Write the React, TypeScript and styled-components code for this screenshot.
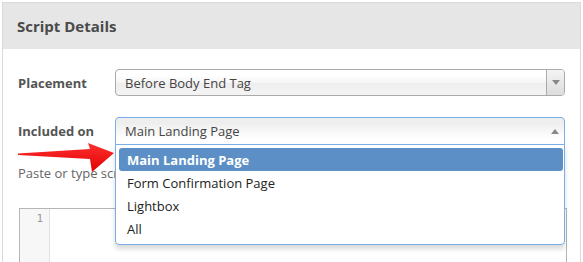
import React from "react";
import styled, { createGlobalStyle } from "styled-components";

const Global = createGlobalStyle`
  html, body { margin: 0; padding: 0; background: #fff; overflow: hidden; }
  body { font-family: "Open Sans", "Noto Sans", sans-serif; }
  * { box-sizing: border-box; }
`;

const Page = styled.div`
  position: relative;
  width: 583px;
  height: 262px;
  overflow: hidden;
  padding: 2px 2px 0 2px;
`;

const Panel = styled.section`
  border: 1px solid #dadada;
  min-height: 320px;
  background: #fff;
`;

const Header = styled.header`
  height: 46px;
  background: #e6e6e6;
  display: flex;
  align-items: center;
  padding-left: 14px;
`;

const Title = styled.h2`
  margin: 0;
  font-size: 15px;
  font-weight: 700;
  color: #4a4a4a;
  letter-spacing: 0;
`;

const Body = styled.div`
  padding: 20px 14px 0 15px;
  display: flex;
  flex-direction: column;
`;

const Row = styled.div<{ $gap?: number }>`
  display: grid;
  grid-template-columns: 97px 450px;
  align-items: center;
  margin-bottom: ${(p) => p.$gap ?? 0}px;
`;

const Label = styled.label`
  font-size: 13px;
  font-weight: 700;
  color: #555;
`;

const SelectBox = styled.div<{ $open?: boolean }>`
  position: relative;
  height: ${(p) => (p.$open ? 28 : 27)}px;
  border: 1px solid ${(p) => (p.$open ? "#79aee8" : "#aaa")};
  border-radius: ${(p) => (p.$open ? "4px 4px 0 0" : "4px")};
  background: ${(p) =>
    p.$open
      ? "linear-gradient(#eee 20%, #fff 80%)"
      : "linear-gradient(#fff 20%, #f6f6f6 50%, #eee 52%, #f4f4f4 100%)"};
  display: flex;
  align-items: center;
  font-size: 13px;
  color: #444;
`;

const SelectText = styled.span`
  flex: 1;
  padding-left: 9px;
  white-space: nowrap;
`;

const ArrowCell = styled.div<{ $open?: boolean }>`
  width: 18px;
  align-self: stretch;
  display: flex;
  align-items: center;
  justify-content: center;
  border-left: ${(p) => (p.$open ? "none" : "1px solid #aaa")};
  background: ${(p) => (p.$open ? "transparent" : "linear-gradient(#f4f4f4, #ddd)")};
  border-radius: 0 3px 3px 0;
`;

const Tri = styled.span<{ $up?: boolean }>`
  width: 0;
  height: 0;
  border-left: 4px solid transparent;
  border-right: 4px solid transparent;
  ${(p) => (p.$up ? "border-bottom: 5px solid #888;" : "border-top: 5px solid #888;")}
`;

const Drop = styled.ul`
  position: absolute;
  left: -1px;
  right: -1px;
  top: 100%;
  margin: 0;
  list-style: none;
  padding: 3px 1px 4px 3px;
  background: #fff;
  border: 1px solid #79aee8;
  border-radius: 0 0 4px 4px;
  box-shadow: 0 4px 5px rgba(0, 0, 0, 0.15);
  z-index: 2;
`;

const Option = styled.li<{ $active?: boolean }>`
  height: 23px;
  display: flex;
  align-items: center;
  padding-left: 8px;
  font-size: 13px;
  border-radius: 3px;
  font-weight: ${(p) => (p.$active ? 700 : 400)};
  color: ${(p) => (p.$active ? "#fff" : "#222")};
  background: ${(p) => (p.$active ? "#5b8fc5" : "transparent")};
`;

const Help = styled.p`
  margin: 19px 0 0 0;
  font-size: 13px;
  line-height: 18px;
  color: #666;
`;

const Editor = styled.div`
  margin: 26px -1px 0 1px;
  height: 80px;
  border: 1px solid #b5b5b5;
  display: flex;
`;

const Gutter = styled.div`
  width: 30px;
  background: #f7f7f7;
  border-right: 1px solid #e2e2e2;
  text-align: right;
  padding: 3px 6px 0 0;
  font-family: "DejaVu Sans Mono", monospace;
  font-size: 11px;
  color: #999;
`;

const Pointer = styled.svg`
  position: absolute;
  left: 14px;
  top: 138px;
  z-index: 3;
`;

export default function App() {
  const options = ["Main Landing Page", "Form Confirmation Page", "Lightbox", "All"];
  return (
    <Page>
      <Global />
      <Panel>
        <Header>
          <Title>Script Details</Title>
        </Header>
        <Body>
          <Row $gap={21}>
            <Label>Placement</Label>
            <SelectBox>
              <SelectText>Before Body End Tag</SelectText>
              <ArrowCell>
                <Tri />
              </ArrowCell>
            </SelectBox>
          </Row>
          <Row>
            <Label>Included on</Label>
            <SelectBox $open>
              <SelectText>Main Landing Page</SelectText>
              <ArrowCell $open>
                <Tri $up />
              </ArrowCell>
              <Drop>
                {options.map((o, i) => (
                  <Option key={o} $active={i === 0}>
                    {o}
                  </Option>
                ))}
              </Drop>
            </SelectBox>
          </Row>
          <Help>Paste or type script here</Help>
          <Editor>
            <Gutter>1</Gutter>
          </Editor>
        </Body>
      </Panel>
      <Pointer width="104" height="40" viewBox="0 0 104 40">
        <defs>
          <linearGradient id="rg" x1="0" y1="0" x2="0" y2="1">
            <stop offset="0" stopColor="#ff3030" />
            <stop offset="1" stopColor="#e00000" />
          </linearGradient>
        </defs>
        <polygon
          points="4,15.5 76,11 74,5 100,15 78,34 76,21 4,17"
          fill="url(#rg)"
        />
      </Pointer>
    </Page>
  );
}
